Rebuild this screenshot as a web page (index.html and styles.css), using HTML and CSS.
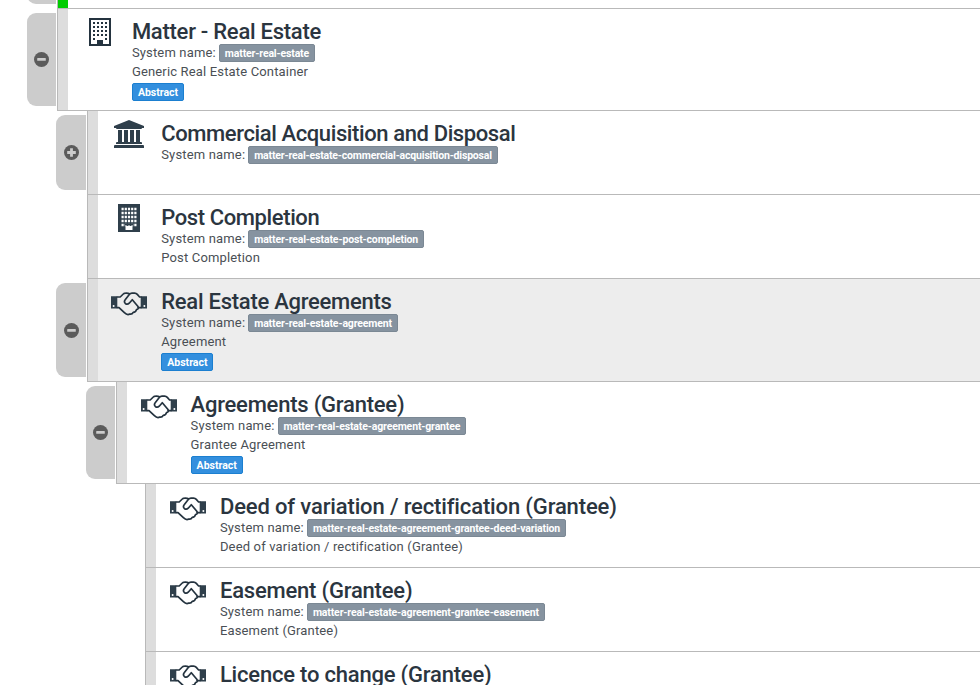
FILE: index.html
```html
<!DOCTYPE html>
<html lang="en">
<head>
<meta charset="utf-8">
<title>Matter types</title>
<link rel="stylesheet" href="styles.css">
</head>
<body>
<svg class="defs" aria-hidden="true">
  <symbol id="minus" viewBox="0 0 15 15"><circle cx="7.5" cy="7.5" r="7.5" fill="#5b5b5b"/><rect x="3.2" y="5.9" width="8.6" height="2.9" rx=".6" fill="#ccc"/></symbol>
  <symbol id="plus" viewBox="0 0 15 15"><circle cx="7.5" cy="7.5" r="7.5" fill="#5b5b5b"/><path d="M6.1 3.2h2.8v2.9h2.9v2.8H8.9v2.9H6.1V8.9H3.2V6.1h2.9z" fill="#ccc"/></symbol>
  <symbol id="building-o" viewBox="0 0 22 28"><path d="M1 1h20v26H1z" fill="#fff" stroke="#24333f" stroke-width="2"/><path d="M4 5h14.500M4 9h14.500M4 13h14.500M4 17h14.500" stroke="#24333f" stroke-width="2" stroke-dasharray="2 2"/><path d="M4 20h2v2h-2zM16 20h2v2h-2zM8 22h6v5H8z" fill="#24333f"/></symbol>
  <symbol id="building" viewBox="0 0 22 28"><path d="M0 0h22v28H0z" fill="#2f3f4b"/><path d="M3.5 5h15M3.5 9h15M3.5 13h15M3.5 17h15M3.5 21h15" stroke="#fff" stroke-width="2.4" stroke-dasharray="2.2 1"/><path d="M7 19.500h8v2H7z" fill="#2f3f4b"/><path d="M7.500 22h7v4h-7z" fill="#fff"/></symbol>
  <symbol id="bank" viewBox="0 0 30 28"><path d="M15 0l15 6v2h-2q0 1-1 1H3q-1 0-1-1H0V6zM4 10h4v12h2V10h4v12h2V10h4v12h2V10h4v12h1q1 0 1 1v1H2v-1q0-1 1-1h1zM1 25h28q1 0 1 1v2H0v-2q0-1 1-1z" fill="#2f3f4b"/></symbol>
  <symbol id="handshake" viewBox="0 0 36 24"><path d="M0 4.2h6.3v12.300H0zM29.700 4.200H36v12.300h-6.300z" fill="#2f3f4b"/><circle cx="2.600" cy="14" r="1" fill="#fff"/><circle cx="33.400" cy="14" r="1" fill="#fff"/><g fill="none" stroke="#24333f" stroke-width="1.7" stroke-linejoin="round" stroke-linecap="round"><path d="M6.300 5H9.200L12.300 2Q13.200 1.100 14.500 1.100 17 .9 18.500 1.700"/><path d="M6.300 15.600H8L13.400 20.700Q16.300 23.600 18.800 22 21.200 22.400 22.200 20.300 24.800 20.300 25.500 17.600 28.400 17 26.800 14.200L21.300 7.700 18.200 11.200Q16.200 13.200 14.200 11.300 12.700 9.600 14.200 7.700L18.300 2.500Q19.400 1.100 21 1.100H23.600Q25.200 1.100 26.300 2.400L28.600 5H30"/><path d="M27.200 15.600H30"/></g></symbol>
</svg>

<ul class="tree">
  <li class="node node--previous">
    <span class="toggle toggle--previous"></span>
    <div class="panel panel--active"></div>
  </li>
  <li class="node node--tall">
    <button class="toggle" aria-label="Collapse"><svg><use href="#minus"/></svg></button>
    <div class="panel">
      <div class="icon"><svg class="icon-building"><use href="#building-o"/></svg></div>
      <div class="info">
        <h2 class="t-matter">Matter - Real Estate</h2>
        <p class="system">System name: <span class="badge">matter-real-estate</span></p>
        <p class="desc">Generic Real Estate Container</p>
        <p class="tags"><span class="badge badge--blue">Abstract</span></p>
      </div>
    </div>
  </li>
  <li>
    <ul class="children">
      <li class="node">
        <button class="toggle" aria-label="Expand"><svg><use href="#plus"/></svg></button>
        <div class="panel">
          <div class="icon"><svg class="icon-bank"><use href="#bank"/></svg></div>
          <div class="info">
            <h2 class="t-commercial">Commercial Acquisition and Disposal</h2>
            <p class="system">System name: <span class="badge badge--tight">matter-real-estate-commercial-acquisition-disposal</span></p>
          </div>
        </div>
      </li>
      <li class="node">
        <span class="toggle toggle--none"></span>
        <div class="panel">
          <div class="icon"><svg class="icon-building"><use href="#building"/></svg></div>
          <div class="info">
            <h2 class="t-post">Post Completion</h2>
            <p class="system">System name: <span class="badge">matter-real-estate-post-completion</span></p>
            <p class="desc">Post Completion</p>
          </div>
        </div>
      </li>
      <li class="node node--taller">
        <button class="toggle" aria-label="Collapse"><svg><use href="#minus"/></svg></button>
        <div class="panel panel--selected">
          <div class="icon"><svg class="icon-hands"><use href="#handshake"/></svg></div>
          <div class="info">
            <h2 class="t-real">Real Estate Agreements</h2>
            <p class="system">System name: <span class="badge">matter-real-estate-agreement</span></p>
            <p class="desc">Agreement</p>
            <p class="tags"><span class="badge badge--blue">Abstract</span></p>
          </div>
        </div>
      </li>
      <li>
        <ul class="children">
          <li class="node node--tall">
            <button class="toggle" aria-label="Collapse"><svg><use href="#minus"/></svg></button>
            <div class="panel">
              <div class="icon"><svg class="icon-hands"><use href="#handshake"/></svg></div>
              <div class="info">
                <h2 class="t-agreements">Agreements (Grantee)</h2>
                <p class="system">System name: <span class="badge">matter-real-estate-agreement-grantee</span></p>
                <p class="desc">Grantee Agreement</p>
                <p class="tags"><span class="badge badge--blue">Abstract</span></p>
              </div>
            </div>
          </li>
          <li>
            <ul class="children">
              <li class="node">
                <span class="toggle toggle--none"></span>
                <div class="panel">
                  <div class="icon"><svg class="icon-hands"><use href="#handshake"/></svg></div>
                  <div class="info">
                    <h2 class="t-deed">Deed of variation / rectification (Grantee)</h2>
                    <p class="system">System name: <span class="badge">matter-real-estate-agreement-grantee-deed-variation</span></p>
                    <p class="desc">Deed of variation / rectification (Grantee)</p>
                  </div>
                </div>
              </li>
              <li class="node">
                <span class="toggle toggle--none"></span>
                <div class="panel">
                  <div class="icon"><svg class="icon-hands"><use href="#handshake"/></svg></div>
                  <div class="info">
                    <h2>Easement (Grantee)</h2>
                    <p class="system">System name: <span class="badge">matter-real-estate-agreement-grantee-easement</span></p>
                    <p class="desc">Easement (Grantee)</p>
                  </div>
                </div>
              </li>
              <li class="node node--clipped">
                <span class="toggle toggle--none"></span>
                <div class="panel">
                  <div class="icon"><svg class="icon-hands"><use href="#handshake"/></svg></div>
                  <div class="info">
                    <h2>Licence to change (Grantee)</h2>
                  </div>
                </div>
              </li>
            </ul>
          </li>
        </ul>
      </li>
    </ul>
  </li>
</ul>
</body>
</html>
```
FILE: styles.css
```css
* { box-sizing: border-box; }
html, body { height: 100%; overflow: hidden; }
body {
  margin: 0;
  background: #fff;
  color: #4a4f55;
  font: 13px/19px Roboto, "Liberation Sans", sans-serif;
}
.defs { display: none; }
ul { list-style: none; margin: 0; padding: 0; }
h2, p { margin: 0; white-space: nowrap; }

.tree { padding-left: 27px; }
.children { padding-left: 29.35px; }

.node { display: flex; height: 84px; }
.node--tall { height: 102px; }
.node--taller { height: 103px; }
.node--previous { height: 9px; }
.node--clipped { height: 33px; overflow: hidden; }
.node--clipped .panel { border-bottom: 0; }
.node--clipped h2 { padding-top: 2px; line-height: 21px; }

.toggle {
  flex: none;
  display: flex;
  align-items: center;
  justify-content: center;
  width: 29.4px;
  margin: 4px 1px 5px 0;
  padding: 0;
  border: 0;
  border-radius: 9px 0 0 9px;
  background: #ccc;
}
.toggle svg { width: 15px; height: 15px; }
.toggle--none { background: none; }
.toggle--previous { height: 20px; margin-top: -16px; }

.panel {
  flex: 1;
  display: flex;
  border-left: 1px solid #b9b9b9;
  border-bottom: 1px solid #b9b9b9;
  background: linear-gradient(#ddd, #ddd) 0 0 / 10px 100% no-repeat #fff;
  padding-left: 10px;
}
.panel--active { background-image: linear-gradient(#0c0, #0c0); }
.panel--selected { background-color: #ededed; }

.icon {
  flex: none;
  display: flex;
  justify-content: center;
  align-items: flex-start;
  width: 63.5px;
  padding: 9px 0 0 0;
}
.icon-building { width: 22px; height: 28px; }
.icon-bank { width: 30px; height: 28px; margin-right: 1px; }
.icon-hands { width: 36px; height: 24px; margin-top: 4px; }

.info { padding-top: 10px; }
h2 {
  color: #2b353f;
  font-size: 22px;
  font-weight: 500;
  line-height: 25px;
  letter-spacing: -.2px;
}
.t-matter, .t-real { letter-spacing: -.26px; }
.t-commercial, .t-post { letter-spacing: -.39px; }
.t-agreements { letter-spacing: -.22px; }
.t-deed { letter-spacing: -.14px; }

.system, .desc { letter-spacing: .16px; }
.system { display: flex; align-items: center; height: 17px; gap: 3px; }
.desc { height: 21px; line-height: 21px; }
.tags { display: flex; padding-top: 1px; }

.badge {
  display: inline-block;
  height: 18px;
  padding: 0 5px;
  border: 1px solid #7b8894;
  border-radius: 2px;
  background: #8693a0;
  color: #fff;
  font-size: 10.5px;
  font-weight: 700;
  line-height: 17px;
  letter-spacing: -.15px;
}
.badge--tight { letter-spacing: -.18px; }
.badge--blue { border-color: #1b7fd0; background: #338fde; letter-spacing: 0; }
```
